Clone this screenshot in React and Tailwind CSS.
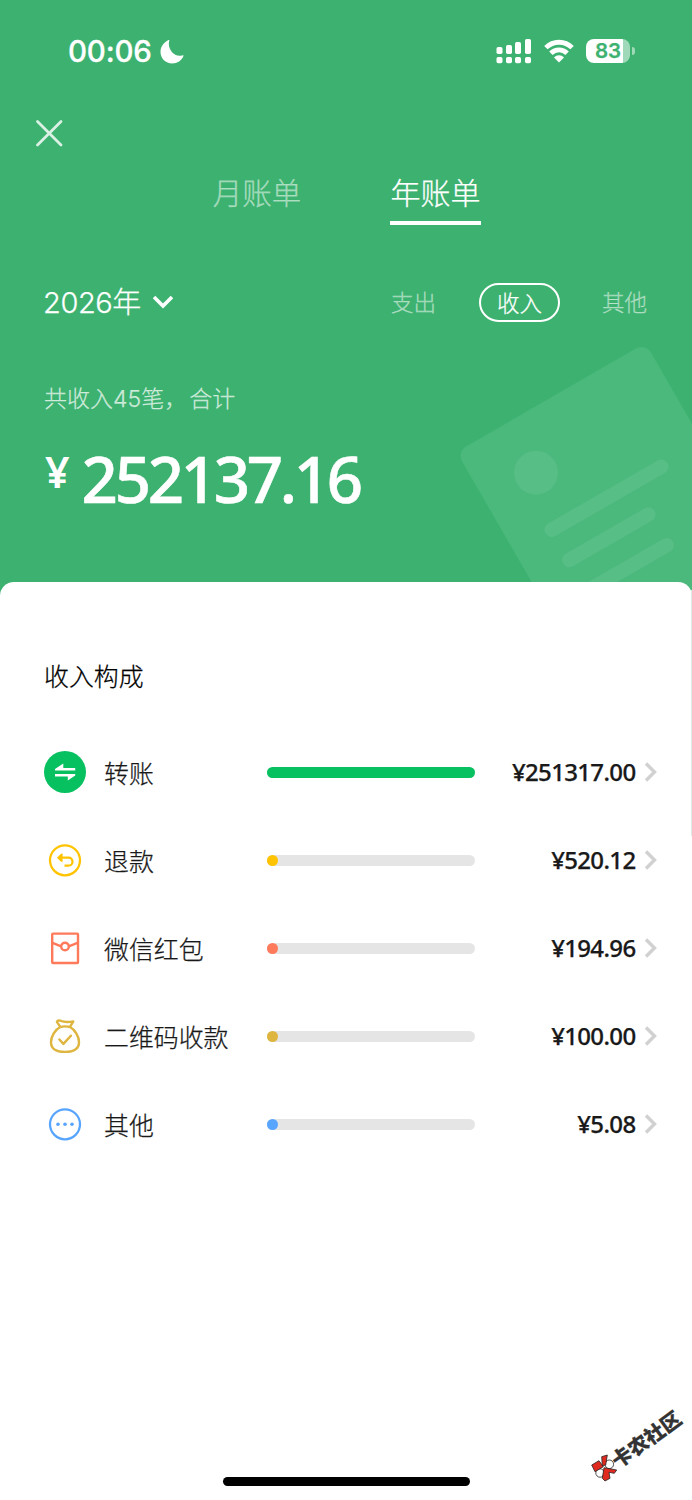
import clsx from 'clsx';

const cats = [
    { name: '转账', amount: '¥251317.00', bar: 'w-full bg-[#07c160]', Icon: TransferIcon },
    { name: '退款', amount: '¥520.12', bar: 'w-[11px] bg-[#ffc300]', Icon: RefundIcon },
    { name: '微信红包', amount: '¥194.96', bar: 'w-[11px] bg-[#ff7a5a]', Icon: PacketIcon },
    { name: '二维码收款', amount: '¥100.00', bar: 'w-[11px] bg-[#deb53e]', Icon: BagIcon },
    { name: '其他', amount: '¥5.08', bar: 'w-[11px] bg-[#58a5ff]', Icon: MoreIcon },
];

function TransferIcon() {
    return (
        <svg className="size-[42px]" viewBox="0 0 42 42">
            <circle cx="21" cy="21" r="21" fill="#07c160" />
            <path d="M11 19.6V18L19.3 12.4V17H31.2V19.6zM31.2 22.9V24.5L23.8 29.6V25.5H11V22.9z" fill="#fff" />
        </svg>
    );
}

function RefundIcon() {
    return (
        <svg className="size-[42px]" viewBox="0 0 42 42" fill="none" stroke="#ffc300">
            <circle cx="21" cy="21.3" r="15" strokeWidth="2.3" />
            <path d="M15 18.7H24.5A4 4 0 0 1 24.5 26.7H20.5" strokeWidth="2.2" />
            <path d="M18.5 14.3 14.6 18.7 18.5 23Z" fill="#ffc300" stroke="none" />
            <path d="M18 15.2 14.5 18.7 18 22.2" strokeWidth="2.2" />
        </svg>
    );
}

function PacketIcon() {
    return (
        <svg className="size-[42px]" viewBox="0 0 42 42" fill="none" stroke="#ff7a5a" strokeWidth="2.4">
            <rect x="8.2" y="6.6" width="25.8" height="29.4" rx="0.8" />
            <path d="M8.5 15.8 17.2 19.4M33.5 15.8 24.8 19.4" />
            <circle cx="21" cy="19.5" r="3.8" />
        </svg>
    );
}

function BagIcon() {
    return (
        <svg className="size-[42px]" viewBox="0 0 42 42" fill="none" stroke="#deb53e" strokeWidth="2.4" strokeLinejoin="round" strokeLinecap="round">
            <path d="M16.3 11.8 12.9 6.8Q13.5 5.1 16 5.7C20 7.2 24 7.4 29.3 6.4L26 11.8" />
            <path d="M16.3 12Q21 10.8 26 12C30.8 14.6 35 21 35 27.3C35 34.3 29.5 36.9 21 36.9S7 34.3 7 27.3C7 21 11.2 14.6 16.3 12Z" />
            <path d="M15.4 24.5 19.4 28.9 26.9 20.7" />
        </svg>
    );
}

function MoreIcon() {
    return (
        <svg className="size-[42px]" viewBox="0 0 42 42" fill="#58a5ff">
            <circle cx="21" cy="21.3" r="15" fill="none" stroke="#58a5ff" strokeWidth="2.3" />
            <circle cx="14" cy="21.3" r="1.8" />
            <circle cx="21" cy="21.3" r="1.8" />
            <circle cx="28" cy="21.3" r="1.8" />
        </svg>
    );
}

function StatusBar() {
    return (
        <div className="flex h-[102px] items-center justify-between pr-[57px] pl-[68px] text-white">
            <div className="flex items-center gap-[8px]">
                <span className="pt-[2px] font-['Inter',sans-serif] text-[29.5px] leading-none font-medium tracking-[-0.2px] [-webkit-text-stroke:0.3px]">00:06</span>
                <svg className="mt-px h-6 w-6" viewBox="0 0 24 24" fill="currentColor">
                    <path d="M9.3.7C6.9 7.6 13.8 18.3 22.7 15.3c.5-.2 1 .2.8.7C21.8 20.5 17.3 23.5 12.2 23.5 5.7 23.5.5 18.5.5 12 .5 7 3.7 2.4 8.5.1c.5-.2 1 .1.8.6z" />
                </svg>
            </div>
            <div className="flex items-center">
                <svg className="h-[26px] w-9" viewBox="0 0 36 26" fill="currentColor">
                    <rect x="0.5" y="9" width="6" height="7" rx="1.7" />
                    <rect x="10" y="7" width="6" height="9" rx="1.7" />
                    <rect x="19" y="4" width="6" height="12" rx="1.7" />
                    <rect x="29" y="1" width="6" height="15" rx="1.7" />
                    <rect x="0.5" y="19" width="6" height="6.3" rx="1.7" />
                    <rect x="10" y="19" width="6" height="6.3" rx="1.7" />
                    <rect x="19" y="19" width="6" height="6.3" rx="1.7" />
                    <rect x="29" y="19" width="6" height="6.3" rx="1.7" />
                </svg>
                <svg className="ml-3 h-6 w-[30px]" viewBox="0 0 30 24" fill="none" stroke="currentColor" strokeWidth="4.8">
                    <path d="M1.9 8.6A18.7 18.7 0 0 1 28.1 8.6" />
                    <path d="M6.9 14.3A11.5 11.5 0 0 1 23.1 14.3" />
                    <path d="M15 23.4 10 18.5A6.9 6.9 0 0 1 20 18.5Z" fill="currentColor" stroke="none" />
                </svg>
                <div className="ml-3 flex h-6 w-[44px] items-center justify-center rounded-[8px] bg-[linear-gradient(to_right,#fff_37px,#a0d9b9_37px)] pt-px font-['Inter',sans-serif] text-[20.5px] leading-none font-semibold text-[#3db270]">
                    83
                </div>
                <div className="ml-[2px] h-[8px] w-[3px] rounded-r-full bg-white/50" />
            </div>
        </div>
    );
}

export default function App() {
    return (
        <div className="relative flex h-[1500px] w-[692px] flex-col overflow-hidden bg-[#3db270] font-['Noto_Sans_CJK_SC',sans-serif] font-light [-webkit-text-stroke:0.25px]">
            {/* Header illustration */}
            <svg className="absolute top-[330px] left-[440px] h-[264px] w-[252px]" viewBox="0 0 252 264">
                <rect width="218" height="320" rx="11" fill="#4bb87c" transform="translate(16.6 122) rotate(-30)" />
                <g fill="#57be85" stroke="#57be85" strokeWidth="14.5" strokeLinecap="round">
                    <circle cx="96" cy="142.7" r="22" stroke="none" />
                    <path d="M111.7 199.7 221.3 136.7M129.3 230 208.3 184.5M140 265 226.7 215.3" />
                </g>
            </svg>

            <header className="relative h-[582px] shrink-0 text-white">
                <StatusBar />
                <div className="flex h-[62px] items-center pl-[36px]">
                    <svg className="size-[27px]" viewBox="0 0 27 27" fill="none" stroke="#dcf1e5" strokeWidth="2.7" strokeLinecap="round">
                        <path d="M1.5 1.5 25 25M25 1.5 1.5 25" />
                    </svg>
                </div>

                {/* Tabs */}
                <div className="flex h-[61px] justify-center gap-[88px] text-[30px] leading-[55px]">
                    <span className="w-[91px] pl-px text-center text-[29.5px] text-white/50">月账单</span>
                    <span className="w-[91px] border-b-4 border-white text-center">年账单</span>
                </div>

                <div className="mt-[57px] flex h-10 items-center justify-between pr-[45px] pl-[43px]">
                    <div className="flex items-center">
                        <span className="pb-[2px] text-[29px] leading-[38px]">
                            <span className="font-['Inter',sans-serif] tracking-[-0.4px]">2026</span>年
                        </span>
                        <svg className="ml-[12px] h-[14px] w-[20px]" viewBox="0 0 20 14" fill="none" stroke="currentColor" strokeWidth="3.6">
                            <path d="M1 2 10 11 19 2" />
                        </svg>
                    </div>
                    <div className="flex items-center text-[22.5px] leading-[36px]">
                        <span className="pb-[2px] text-white/50">支出</span>
                        <span className="mr-[42px] ml-[43px] flex h-[39px] w-[81px] items-center justify-center rounded-full border-2 border-white pb-px">收入</span>
                        <span className="pb-[2px] text-white/50">其他</span>
                    </div>
                </div>

                <p className="mt-[57px] pl-[44px] text-[23px] leading-[36px] text-white/70">
                    共收入<span className="font-['Inter',sans-serif]">45</span>笔，<span className="ml-[2px]">合计</span>
                </p>
                <div className="mt-[22px] flex items-start pl-[45px] font-['Noto_Sans',sans-serif] font-medium">
                    <span className="text-[43px] leading-[66px] font-semibold [-webkit-text-stroke:0px]">¥</span>
                    <span className="ml-[12px] text-[63.5px] leading-[79px] tracking-[-3.3px] [-webkit-text-stroke:0.6px]">252137.16</span>
                </div>
            </header>

            <main className="relative flex-1 rounded-t-[14px] bg-white pt-[75px] pr-[35.5px] pl-[44px] text-[24.9px] text-[#191919]">
                <div className="absolute top-2 right-0 h-[246px] w-px bg-[#dceae3]" />
                <h2 className="h-[71px] leading-[36px] font-light text-black">收入构成</h2>
                {cats.map(({ name, amount, bar, Icon }) => (
                    <div key={name} className="flex h-[88px] items-center">
                        <Icon />
                        <span className="ml-[18px] w-[163.3px] pt-px">{name}</span>
                        <div className="h-[11px] w-[208px] rounded-full bg-[#e5e5e5]">
                            <div className={clsx('h-full rounded-full', bar)} />
                        </div>
                        <span className="ml-auto font-['Noto_Sans',sans-serif] text-[24px] font-medium tracking-[-0.65px]">{amount}</span>
                        <svg className="ml-[9px] h-5 w-3" viewBox="0 0 12 20" fill="none" stroke="#d1d1d1" strokeWidth="3.4">
                            <path d="M1 1.5 9.5 10 1 18.5" />
                        </svg>
                    </div>
                ))}
            </main>

            {/* Watermark */}
            <div className="absolute top-[1428px] left-[599px] w-[94px] -rotate-36 text-center text-[20px] leading-[22px] font-black text-[#333]">
                卡农社区
            </div>
            <svg className="absolute top-[1454px] left-[591px] h-[28px] w-[27px]" viewBox="0 0 27 28" stroke="#222" strokeWidth="0.8">
                <circle cx="18.3" cy="10.3" r="4.3" fill="#fff" />
                <circle cx="9" cy="19" r="4.2" fill="#fff" />
                <path d="M.7 11 8 6.7 12.3 12.7 4 17.7Z" fill="#e02a20" />
                <path d="M10.7 2.7 16.3 1 14.7 11 11.3 11.7Z" fill="#e02a20" />
                <path d="M13 13.7 25.7 16 23.3 19.3 18 18.3 19 24.3 14 27 11.3 24.3Z" fill="#e02a20" />
            </svg>

            <div className="absolute bottom-[14px] left-[223px] h-[9px] w-[247px] rounded-full bg-black" />
        </div>
    );
}
